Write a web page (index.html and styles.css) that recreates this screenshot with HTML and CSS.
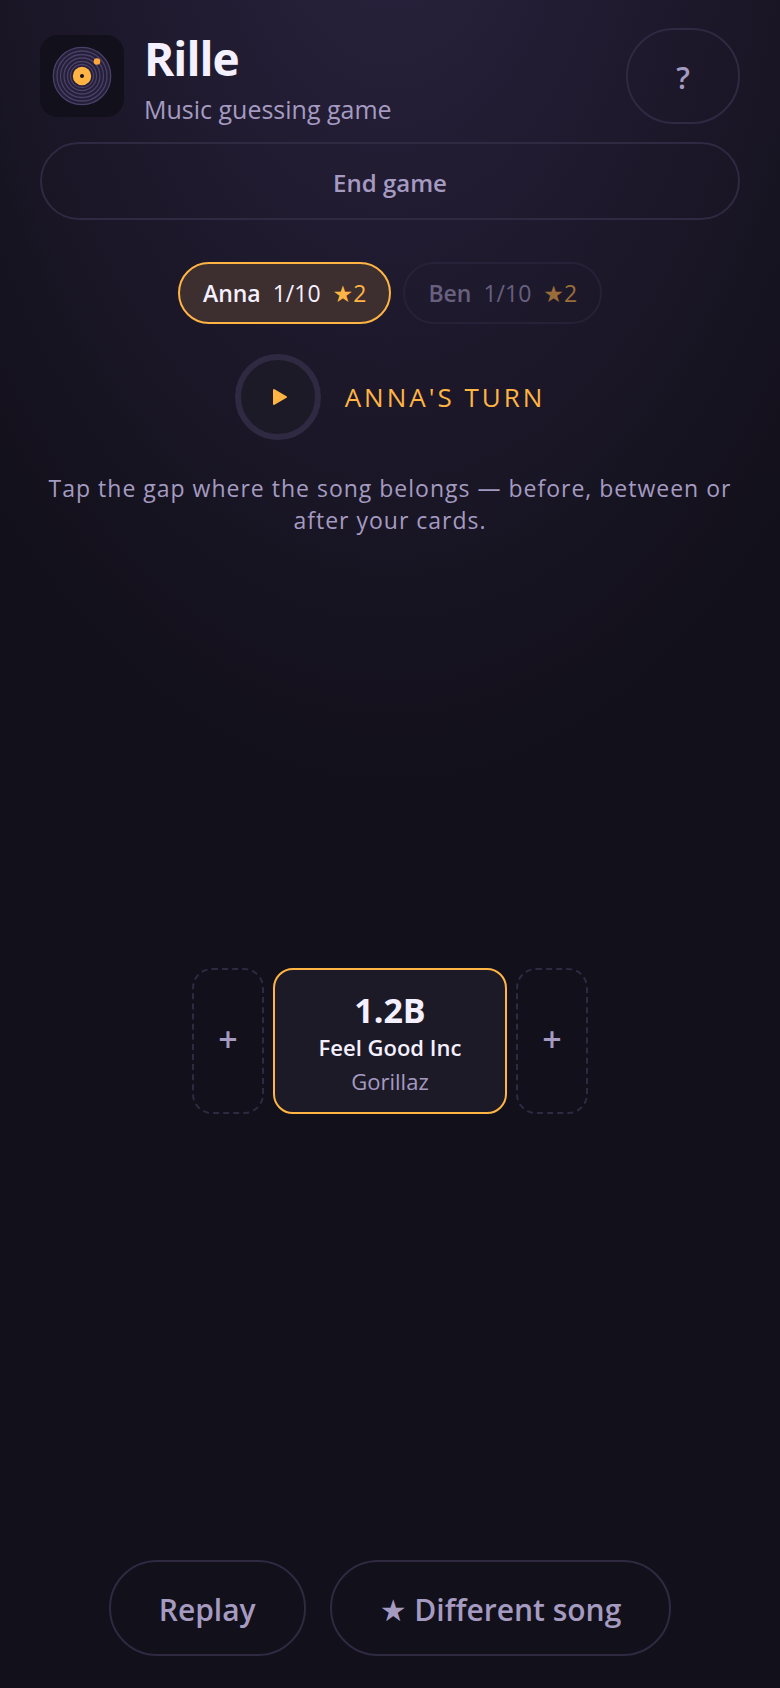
FILE: index.html
```
<!DOCTYPE html>
<html lang="en">
<head>
    <meta charset="UTF-8">
    <meta name="viewport" content="width=device-width, initial-scale=1.0">
    <title>Rille</title>
    <link rel="stylesheet" href="styles.css">
</head>
<body>
    <header class="header">
        <svg class="logo" viewBox="0 0 84 82" aria-hidden="true">
            <rect width="84" height="82" rx="18" fill="#12101a"/>
            <circle cx="42" cy="41" r="29" fill="#251f38"/>
            <g fill="none" stroke="#4a4069" stroke-width="1.3">
                <circle cx="42" cy="41" r="28.7"/>
                <circle cx="42" cy="41" r="25"/>
                <circle cx="42" cy="41" r="21.5"/>
                <circle cx="42" cy="41" r="18"/>
                <circle cx="42" cy="41" r="14.5"/>
                <circle cx="42" cy="41" r="11.5"/>
            </g>
            <circle cx="42" cy="41" r="9.2" fill="#ffb443"/>
            <circle cx="42" cy="41" r="2" fill="#12101a"/>
            <circle cx="57" cy="26.5" r="3.3" fill="#ffa63d"/>
        </svg>
        <div class="brand">
            <h1>Rille</h1>
            <p>Music guessing game</p>
        </div>
        <button type="button" class="btn btn-help" aria-label="Help">?</button>
        <button type="button" class="btn btn-end">End game</button>
    </header>

    <main class="game">
        <ul class="players">
            <li class="player active"><strong>Anna</strong> <span>1/10</span> <span class="tokens">★2</span></li>
            <li class="player"><strong>Ben</strong> <span>1/10</span> <span class="tokens">★2</span></li>
        </ul>

        <div class="turn">
            <button type="button" class="play" aria-label="Play">
                <svg viewBox="0 0 16 18" aria-hidden="true">
                    <path d="M2 2v14l12-7z" fill="#ffb443" stroke="#ffb443" stroke-width="2" stroke-linejoin="round"/>
                </svg>
            </button>
            <h2>Anna's turn</h2>
        </div>

        <p class="hint">Tap the gap where the song belongs — before, between or after your cards.</p>

        <div class="timeline">
            <button type="button" class="gap" aria-label="Place before">+</button>
            <article class="card">
                <span class="value">1.2B</span>
                <span class="song">Feel Good Inc</span>
                <span class="artist">Gorillaz</span>
            </article>
            <button type="button" class="gap" aria-label="Place after">+</button>
        </div>
    </main>

    <footer class="actions">
        <button type="button" class="btn">Replay</button>
        <button type="button" class="btn">★ Different song</button>
    </footer>
</body>
</html>
```
FILE: styles.css
```
:root {
    --bg: #12101a;
    --surface: #1d1a28;
    --line: #2f2942;
    --text: #f4f0ff;
    --muted: #a59bc1;
    --accent: #ffb443;
}

* {
    box-sizing: border-box;
    margin: 0;
    padding: 0;
}

body {
    min-height: 100vh;
    display: flex;
    flex-direction: column;
    padding: 28px 40px 32px;
    background: radial-gradient(72% 57% at 50% -10%, #2a2340 0%, var(--bg) 100%) no-repeat var(--bg);
    color: var(--text);
    font-family: "Open Sans", "DejaVu Sans", sans-serif;
    font-size: 24px;
    line-height: 32px;
}

button {
    font: inherit;
    color: var(--muted);
    cursor: pointer;
}

.btn {
    padding-top: 4px;
    background: transparent;
    border: 2px solid var(--line);
    border-radius: 48px;
    font-weight: 600;
}

/* Header */
.header {
    display: flex;
    flex-wrap: wrap;
    align-items: center;
    gap: 18px 20px;
}

.logo {
    width: 84px;
    height: 82px;
}

.brand {
    flex: 1;
}

.brand h1 {
    margin-bottom: 6px;
    font-size: 46px;
    line-height: 60px;
    letter-spacing: -1px;
}

.brand p {
    color: var(--muted);
    font-size: 25px;
    line-height: 30px;
}

.btn-help {
    width: 114px;
    height: 96px;
    font-size: 30px;
}

.btn-end {
    width: 100%;
    height: 78px;
}

/* Game */
.game {
    flex: 1;
    display: flex;
    flex-direction: column;
}

.players {
    display: flex;
    justify-content: center;
    gap: 12px;
    margin-top: 42px;
    list-style: none;
}

.player {
    display: flex;
    align-items: center;
    gap: 12px;
    height: 62px;
    padding: 0 23px;
    border: 2px solid var(--line);
    border-radius: 31px;
    font-size: 23px;
    opacity: 0.55;
}

.player:not(.active) {
    color: var(--muted);
}

.player strong {
    font-weight: 600;
}

.player.active {
    background: #3d2e2f;
    border-color: var(--accent);
    opacity: 1;
}

.tokens {
    color: var(--accent);
}

.turn {
    display: flex;
    align-items: center;
    justify-content: center;
    gap: 24px;
    margin-top: 30px;
}

.play {
    display: flex;
    align-items: center;
    justify-content: center;
    width: 86px;
    height: 86px;
    padding-left: 4px;
    background: var(--surface);
    border: 6px solid var(--line);
    border-radius: 50%;
}

.play svg {
    width: 16px;
    height: 18px;
}

.turn h2 {
    color: var(--accent);
    font-size: 26px;
    font-weight: 400;
    letter-spacing: 3px;
    text-transform: uppercase;
}

.hint {
    margin-top: 32px;
    color: var(--muted);
    font-size: 23px;
    letter-spacing: 1px;
    text-align: center;
}

.timeline {
    flex: 1;
    display: flex;
    align-items: center;
    justify-content: center;
    gap: 9px;
}

.gap {
    width: 72px;
    height: 146px;
    padding-bottom: 4px;
    background: transparent;
    border: 2px dashed var(--line);
    border-radius: 20px;
    font-size: 34px;
    font-weight: 600;
}

.card {
    display: flex;
    flex-direction: column;
    align-items: center;
    min-width: 234px;
    padding: 20px 40px 14px;
    background: var(--surface);
    border: 2px solid var(--accent);
    border-radius: 20px;
}

.value {
    font-size: 34px;
    font-weight: 700;
    line-height: 40px;
}

.song {
    font-size: 22px;
    font-weight: 600;
    line-height: 34px;
}

.artist {
    color: var(--muted);
    font-size: 22px;
    line-height: 34px;
}

/* Bottom actions */
.actions {
    display: flex;
    justify-content: center;
    gap: 24px;
    margin-top: 14px;
}

.actions .btn {
    height: 96px;
    padding: 4px 48px 0;
    font-size: 30px;
}
```
